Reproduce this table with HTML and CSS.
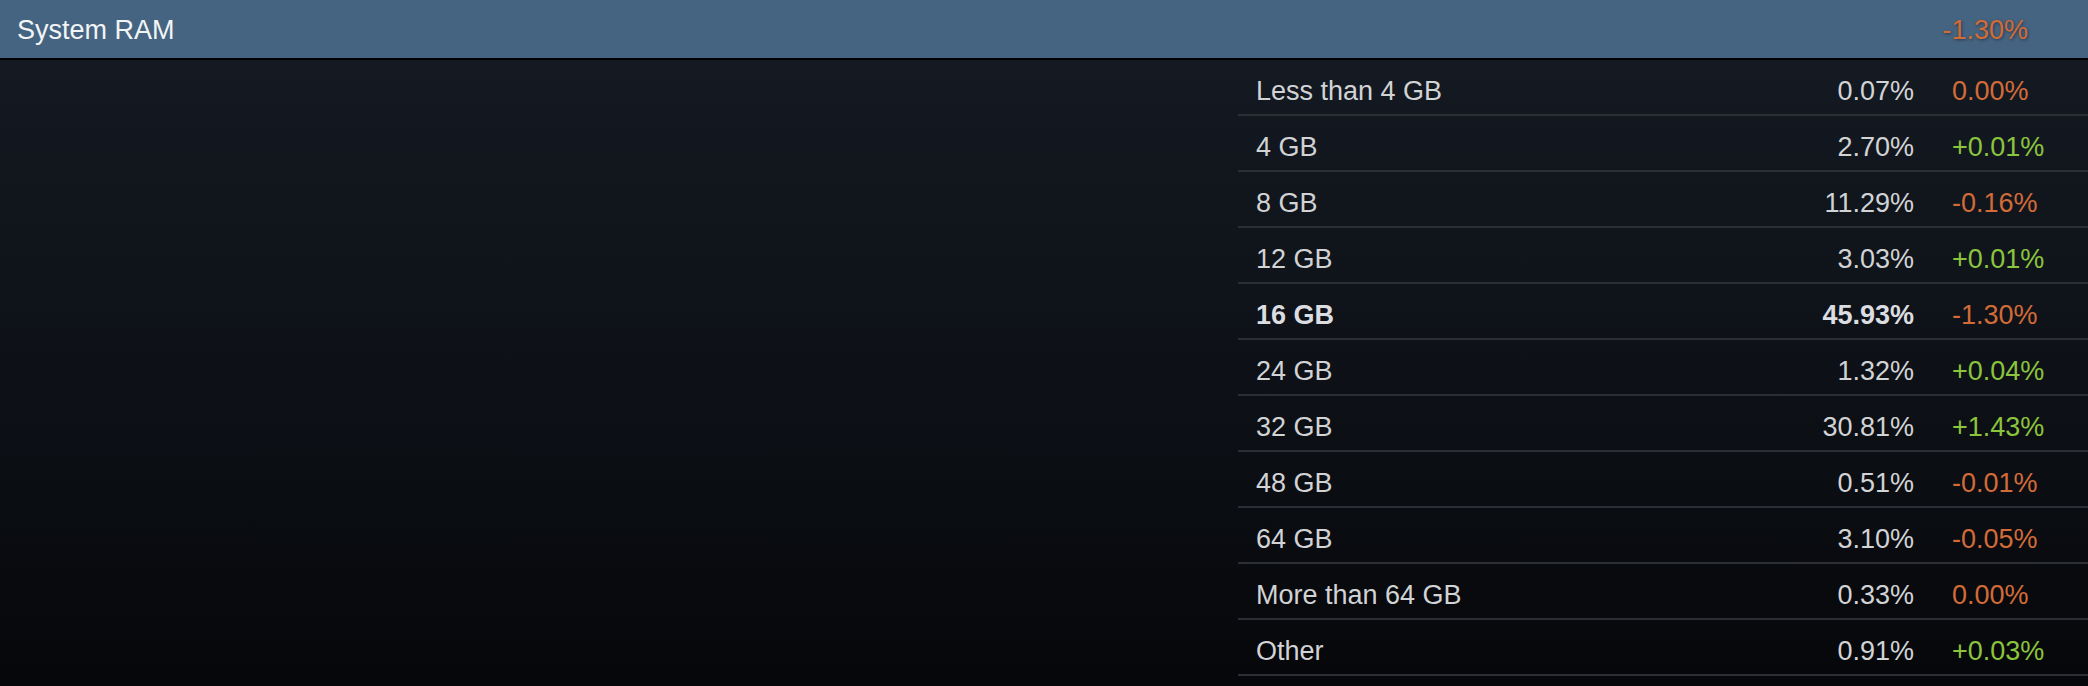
FILE: index.html
```html
<!DOCTYPE html>
<html lang="en">
<head>
<meta charset="utf-8">
<title>System RAM</title>
<link rel="stylesheet" href="styles.css">
</head>
<body>
<div class="page">
  <div class="stat-header">
    <span class="stat-title">System RAM</span>
    <span class="stat-change neg header-change">-1.30%</span>
  </div>
  <div class="stat-body">
    <div class="spacer"></div>
    <div class="stat-table">
      <div class="row"><span class="label">Less than 4 GB</span><span class="pct">0.07%</span><span class="chg neg">0.00%</span></div>
      <div class="row"><span class="label">4 GB</span><span class="pct">2.70%</span><span class="chg pos">+0.01%</span></div>
      <div class="row"><span class="label">8 GB</span><span class="pct">11.29%</span><span class="chg neg">-0.16%</span></div>
      <div class="row"><span class="label">12 GB</span><span class="pct">3.03%</span><span class="chg pos">+0.01%</span></div>
      <div class="row top"><span class="label">16 GB</span><span class="pct">45.93%</span><span class="chg neg">-1.30%</span></div>
      <div class="row"><span class="label">24 GB</span><span class="pct">1.32%</span><span class="chg pos">+0.04%</span></div>
      <div class="row"><span class="label">32 GB</span><span class="pct">30.81%</span><span class="chg pos">+1.43%</span></div>
      <div class="row"><span class="label">48 GB</span><span class="pct">0.51%</span><span class="chg neg">-0.01%</span></div>
      <div class="row"><span class="label">64 GB</span><span class="pct">3.10%</span><span class="chg neg">-0.05%</span></div>
      <div class="row"><span class="label">More than 64 GB</span><span class="pct">0.33%</span><span class="chg neg">0.00%</span></div>
      <div class="row"><span class="label">Other</span><span class="pct">0.91%</span><span class="chg pos">+0.03%</span></div>
    </div>
  </div>
</div>
</body>
</html>
```

FILE: styles.css
```css
* { box-sizing: border-box; }

html, body {
  margin: 0;
  padding: 0;
}

body {
  width: 2088px;
  height: 686px;
  overflow: hidden;
  font-family: "Liberation Sans", Arial, Helvetica, sans-serif;
  background: linear-gradient(to bottom, #151b24 0%, #0e1218 50%, #06070a 100%);
  color: #d2d3d5;
}

.page {
  display: flex;
  flex-direction: column;
  height: 686px;
}

.stat-header {
  height: 60px;
  background: #456481;
  border-bottom: 2px solid #000;
  display: flex;
  align-items: center;
  justify-content: space-between;
  padding: 0 60px 0 17px;
  font-size: 27px;
}

.stat-title {
  color: #f2f4f6;
  padding-top: 3px;
}

.header-change {
  padding-top: 3px;
  text-shadow: 1px 1px 3px rgba(0, 0, 0, 0.45);
}

.stat-body {
  display: flex;
  flex: 1;
}

.spacer {
  flex: 1;
}

.stat-table {
  width: 850px;
  display: flex;
  flex-direction: column;
}

.row {
  height: 56px;
  display: grid;
  grid-template-columns: 1fr 114px 174px;
  padding: 16px 0 0 18px;
  font-size: 27px;
  line-height: 31px;
  border-bottom: 2px solid #2b2f35;
}

.row.top {
  font-weight: bold;
  color: #dcdde0;
}

.label {
  white-space: nowrap;
}

.pct {
  text-align: right;
}

.chg {
  padding-left: 38px;
  font-weight: normal;
}

.neg { color: #d26b37; }
.pos { color: #8bc43d; }
```
